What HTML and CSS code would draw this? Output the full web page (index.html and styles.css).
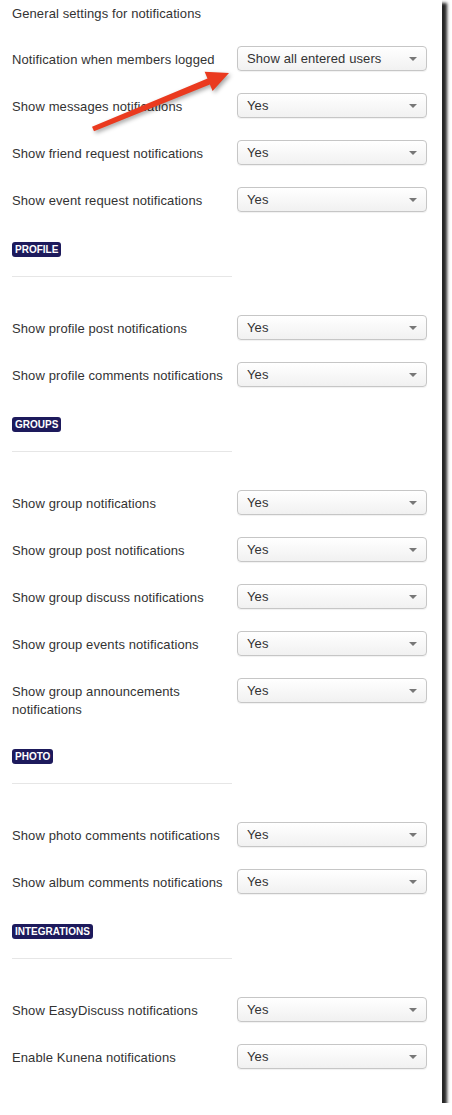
FILE: index.html
```html
<!DOCTYPE html>
<html>
<head>
    <title>Notification Settings</title>
    <link rel="stylesheet" href="styles.css">
</head>
<body>
    <div class="panel">
        <p class="intro">General settings for notifications</p>

        <div class="row">
            <label>Notification when members logged</label>
            <div class="select">Show all entered users</div>
        </div>
        <div class="row">
            <label>Show messages notifications</label>
            <div class="select">Yes</div>
        </div>
        <div class="row">
            <label>Show friend request notifications</label>
            <div class="select">Yes</div>
        </div>
        <div class="row">
            <label>Show event request notifications</label>
            <div class="select">Yes</div>
        </div>

        <div class="section">
            <span class="badge">PROFILE</span>
            <div class="section-rule"></div>
        </div>
        <div class="row">
            <label>Show profile post notifications</label>
            <div class="select">Yes</div>
        </div>
        <div class="row">
            <label>Show profile comments notifications</label>
            <div class="select">Yes</div>
        </div>

        <div class="section">
            <span class="badge">GROUPS</span>
            <div class="section-rule"></div>
        </div>
        <div class="row">
            <label>Show group notifications</label>
            <div class="select">Yes</div>
        </div>
        <div class="row">
            <label>Show group post notifications</label>
            <div class="select">Yes</div>
        </div>
        <div class="row">
            <label>Show group discuss notifications</label>
            <div class="select">Yes</div>
        </div>
        <div class="row">
            <label>Show group events notifications</label>
            <div class="select">Yes</div>
        </div>
        <div class="row">
            <label>Show group announcements notifications</label>
            <div class="select">Yes</div>
        </div>

        <div class="section">
            <span class="badge">PHOTO</span>
            <div class="section-rule"></div>
        </div>
        <div class="row">
            <label>Show photo comments notifications</label>
            <div class="select">Yes</div>
        </div>
        <div class="row">
            <label>Show album comments notifications</label>
            <div class="select">Yes</div>
        </div>

        <div class="section">
            <span class="badge">INTEGRATIONS</span>
            <div class="section-rule"></div>
        </div>
        <div class="row">
            <label>Show EasyDiscuss notifications</label>
            <div class="select">Yes</div>
        </div>
        <div class="row">
            <label>Enable Kunena notifications</label>
            <div class="select">Yes</div>
        </div>

        <svg class="callout" width="240" height="140" viewBox="0 0 240 140">
            <polygon points="92,126.8 207.5,78.4 204.6,71.8 229,73 212.6,91 209.9,84.4 94,131.3" fill="#ea3a1f"/>
        </svg>
    </div>
</body>
</html>
```

FILE: styles.css
```css
body {
    font-family: "Liberation Sans", Arial, sans-serif;
    font-size: 13px;
    letter-spacing: 0.1px;
    color: #333;
    background-color: #fff;
    margin: 0;
}
.panel {
    position: relative;
    width: 442px;
    box-sizing: border-box;
    padding: 5px 12px 12px;
    background: #fff;
    box-shadow: 4px 4px 3px 1px rgba(0, 0, 0, 0.85);
}
.intro {
    margin: 0 0 23px;
    line-height: 18px;
}
.row {
    display: flex;
    align-items: flex-start;
    margin-bottom: 22px;
}
.row label {
    width: 215px;
    margin-right: 10px;
    padding-top: 5px;
    line-height: 18px;
}
.select {
    position: relative;
    width: 190px;
    height: 25px;
    box-sizing: border-box;
    padding: 0 9px;
    line-height: 23px;
    border: 1px solid #c6c6c6;
    border-radius: 4px;
    background: linear-gradient(#fff, #f1f1f1);
    box-shadow: 0 1px 1px rgba(0, 0, 0, 0.06);
}
.select::after {
    content: "";
    position: absolute;
    right: 9px;
    top: 10px;
    border-left: 4px solid transparent;
    border-right: 4px solid transparent;
    border-top: 4px solid #777;
}
.section {
    padding-top: 8px;
}
.badge {
    display: inline-block;
    height: 15px;
    line-height: 15px;
    padding: 0 3px;
    border-radius: 3px;
    background-color: #1d1a5c;
    color: #fff;
    font-size: 10px;
    font-weight: bold;
    letter-spacing: 0;
    vertical-align: top;
}
.section-rule {
    width: 220px;
    border-top: 1px solid #e6e6e6;
    margin: 19px 0 38px;
}
.callout {
    position: absolute;
    left: 0;
    top: 0;
    filter: drop-shadow(2px 2px 2px rgba(0, 0, 0, 0.35));
}
```
